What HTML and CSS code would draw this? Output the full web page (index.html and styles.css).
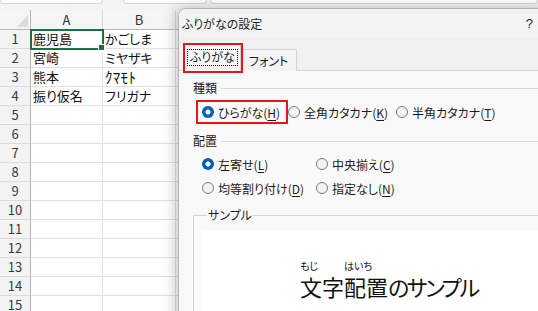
FILE: index.html
```html
<!DOCTYPE html>
<html lang="ja">
<head>
<meta charset="utf-8">
<link rel="stylesheet" href="styles.css">
</head>
<body>
<div class="app">
  <div class="ribbon">
    <span class="tb tb1"></span><span class="tb tb2"></span><span class="tb tb3"></span>
  </div>
  <div class="sheet">
    <div class="corner"></div><div class="ch">A</div><div class="ch">B</div><div class="ch rest"></div>
    <div class="rh">1</div><div class="c sel">鹿児島</div><div class="c">かごしま</div><div class="c rest"></div>
    <div class="rh">2</div><div class="c">宮崎</div><div class="c">ミヤザキ</div><div class="c rest"></div>
    <div class="rh">3</div><div class="c">熊本</div><div class="c half">ｸﾏﾓﾄ</div><div class="c rest"></div>
    <div class="rh">4</div><div class="c">振り仮名</div><div class="c">フリガナ</div><div class="c rest"></div>
    <div class="rh">5</div><div class="c"></div><div class="c"></div><div class="c rest"></div>
    <div class="rh">6</div><div class="c"></div><div class="c"></div><div class="c rest"></div>
    <div class="rh">7</div><div class="c"></div><div class="c"></div><div class="c rest"></div>
    <div class="rh">8</div><div class="c"></div><div class="c"></div><div class="c rest"></div>
    <div class="rh">9</div><div class="c"></div><div class="c"></div><div class="c rest"></div>
    <div class="rh">10</div><div class="c"></div><div class="c"></div><div class="c rest"></div>
    <div class="rh">11</div><div class="c"></div><div class="c"></div><div class="c rest"></div>
    <div class="rh">12</div><div class="c"></div><div class="c"></div><div class="c rest"></div>
    <div class="rh">13</div><div class="c"></div><div class="c"></div><div class="c rest"></div>
    <div class="rh">14</div><div class="c"></div><div class="c"></div><div class="c rest"></div>
    <div class="rh">15</div><div class="c"></div><div class="c"></div><div class="c rest"></div>
  </div>

  <div class="dialog">
    <div class="titlebar"><span>ふりがなの設定</span><span class="help">?</span></div>
    <div class="tabstrip">
      <div class="tab active"><span class="focus">ふりがな</span></div>
      <div class="tab">フォント</div>
    </div>
    <div class="mark mark-tab"></div>
    <div class="panel">
      <div class="legend"><span>種類</span><i class="rule"></i></div>
      <div class="row1">
        <label class="opt o1"><span class="radio on"></span><span>ひらがな(<u>H</u>)</span></label>
        <label class="opt o2"><span class="radio"></span><span>全角カタカナ(<u>K</u>)</span></label>
        <label class="opt o3"><span class="radio"></span><span>半角カタカナ(<u>T</u>)</span></label>
      </div>
      <div class="legend l2"><span>配置</span><i class="rule"></i></div>
      <div class="grid2">
        <label class="opt"><span class="radio on"></span><span>左寄せ(<u>L</u>)</span></label>
        <label class="opt"><span class="radio"></span><span>中央揃え(<u>C</u>)</span></label>
        <label class="opt"><span class="radio"></span><span>均等割り付け(<u>D</u>)</span></label>
        <label class="opt"><span class="radio"></span><span>指定なし(<u>N</u>)</span></label>
      </div>
      <fieldset class="sample">
        <legend>サンプル</legend>
        <div class="preview">
          <div class="rubyline">
            <span class="rb"><span class="rt">もじ</span><span class="base">文字</span></span><span class="rb"><span class="rt">はいち</span><span class="base">配置</span></span><span class="base kana">のサンプル</span>
          </div>
        </div>
      </fieldset>
    </div>
  </div>
</div>
</body>
</html>
```

FILE: styles.css
```css
* { box-sizing: border-box; }
html, body { margin: 0; padding: 0; }
body {
  width: 538px;
  height: 311px;
  overflow: hidden;
  background: #ffffff;
  font-family: "Noto Sans CJK JP", "Noto Sans", sans-serif;
  font-feature-settings: "palt";
  color: #1b1b1b;
}
.app { position: relative; width: 538px; height: 311px; overflow: hidden; }

.ribbon {
  height: 10px;
  background: #f3f3f3;
  display: flex;
  align-items: flex-start;
}
.tb {
  display: block;
  height: 4px;
  background: #ffffff;
  border: 1px solid #d6d6d6;
  border-top: none;
  border-radius: 0 0 4px 4px;
}
.tb1 { width: 103px; }
.tb2 { width: 84px; margin-left: 20px; }
.tb3 { flex: 1; margin-left: 3px; }

.sheet {
  display: grid;
  grid-template-columns: 31px 72px 73px 1fr;
  grid-auto-rows: 19px;
  grid-template-rows: 20px;
  font-size: 13px;
}
.corner, .ch, .rh, .c {
  border-right: 1px solid #e1e1e1;
  border-bottom: 1px solid #e1e1e1;
}
.corner {
  position: relative;
  background: #f5f5f5;
  border-right: 1px solid #b8b8b8;
  border-bottom: 1px solid #b8b8b8;
}
.corner::after {
  content: "";
  position: absolute;
  left: 17px;
  top: 5px;
  width: 11px;
  height: 12px;
  background: #dcdcdc;
  clip-path: polygon(100% 0, 100% 100%, 0 100%);
}
.ch {
  background: #f5f5f5;
  border-bottom: 1px solid #b8b8b8;
  border-right-color: #d8d8d8;
  text-align: center;
  line-height: 20px;
  color: #333333;
}
.rh {
  background: #f3f3f3;
  border-right: 1px solid #b0b0b0;
  border-bottom-color: #dcdcdc;
  text-align: center;
  line-height: 18px;
  color: #3a3a3a;
}
.c {
  padding-left: 2px;
  line-height: 18px;
  white-space: nowrap;
  color: #111111;
}
.ch.rest, .c.rest { border-right: none; }
.half { font-feature-settings: normal; font-size: 15px; letter-spacing: 0.3px; }
.sel {
  position: relative;
  outline: 2px solid #1e6e42;
  outline-offset: -1px;
}
.sel::after {
  content: "";
  position: absolute;
  right: -3px;
  bottom: -3px;
  width: 5px;
  height: 5px;
  background: #1e6e42;
  border: 1px solid #ffffff;
}

.dialog {
  position: absolute;
  left: 178px;
  top: 8px;
  width: 380px;
  height: 320px;
  background: #f9f9f9;
  border: 1px solid #b4b4b4;
  border-radius: 8px 8px 0 0;
  box-shadow: -3px 0 14px rgba(0, 0, 0, 0.22);
  font-size: 12px;
}
.titlebar {
  height: 29px;
  background: #f3f3f3;
  border-radius: 8px 8px 0 0;
  display: flex;
  align-items: center;
  justify-content: space-between;
  padding: 0 24px 0 3px;
  color: #1f1f1f;
}
.help { font-family: "Liberation Sans", sans-serif; font-size: 13px; }
.tabstrip {
  height: 33px;
  background: #f0f0f0;
  border-bottom: 1px solid #d9d9d9;
  display: flex;
  align-items: flex-end;
  padding-left: 5px;
}
.tab {
  height: 22px;
  margin-bottom: -1px;
  padding: 0 8px;
  border: 1px solid #d4d4d4;
  border-bottom: none;
  border-left: none;
  background: #f3f3f3;
  display: flex;
  align-items: center;
  white-space: nowrap;
  color: #1b1b1b;
}
.tab.active {
  height: 28px;
  width: 57px;
  padding: 0;
  border-left: 1px solid #d4d4d4;
  background: #f9f9f9;
  justify-content: center;
}
.focus {
  border: 1px dotted #111111;
  padding: 0 2px 1px;
  line-height: 14px;
}
.mark {
  position: absolute;
  border: 2px solid #e8141a;
}
.mark-tab { left: 4px; top: 34px; width: 60px; height: 30px; }

.panel { padding: 9px 0 0 14px; }
.legend {
  display: flex;
  align-items: center;
  height: 16px;
  line-height: 16px;
}
.legend .rule {
  flex: 1;
  height: 1px;
  background: #d6d6d6;
  margin-left: 4px;
}
.l2 { margin-top: 9px; }
.opt {
  display: flex;
  align-items: center;
  height: 24px;
  white-space: nowrap;
}
.radio {
  width: 12px;
  height: 12px;
  border-radius: 50%;
  border: 1px solid #7b7b7b;
  background: #f4f4f4;
  margin-right: 4px;
  flex: none;
}
.radio.on {
  border: none;
  background: radial-gradient(circle, #ffffff 0 2.3px, #005fb8 2.9px);
}
u { text-decoration: underline; text-underline-offset: 2px; }
.row1 { display: flex; margin-top: 4px; }
.o1 {
  margin-left: 3px;
  width: 92px;
  padding-left: 4px;
  border: 2px solid #e8141a;
}
.o2 { width: 108px; }
.o3 { width: 130px; }
.grid2 {
  display: grid;
  grid-template-columns: 114px auto;
  grid-auto-rows: 24px;
  margin: 3px 0 0 9px;
}
.sample {
  margin: 7px 0 0 0;
  padding: 8px 0 0 8px;
  border: 1px solid #d6d6d6;
  border-right: none;
  border-bottom: none;
  min-width: 0;
}
.sample legend {
  padding: 0 1px;
  margin-left: 5px;
  line-height: 16px;
}
.preview {
  background: #ffffff;
  height: 90px;
  padding: 29px 0 0 98px;
}
.rubyline { display: flex; align-items: flex-end; }
.rb { display: inline-flex; flex-direction: column; align-items: flex-start; }
.rt { font-size: 10px; line-height: 12px; margin-bottom: 2px; color: #111111; }
.base { font-size: 22px; line-height: 24px; color: #111111; }
.kana { letter-spacing: -2.4px; }
```
